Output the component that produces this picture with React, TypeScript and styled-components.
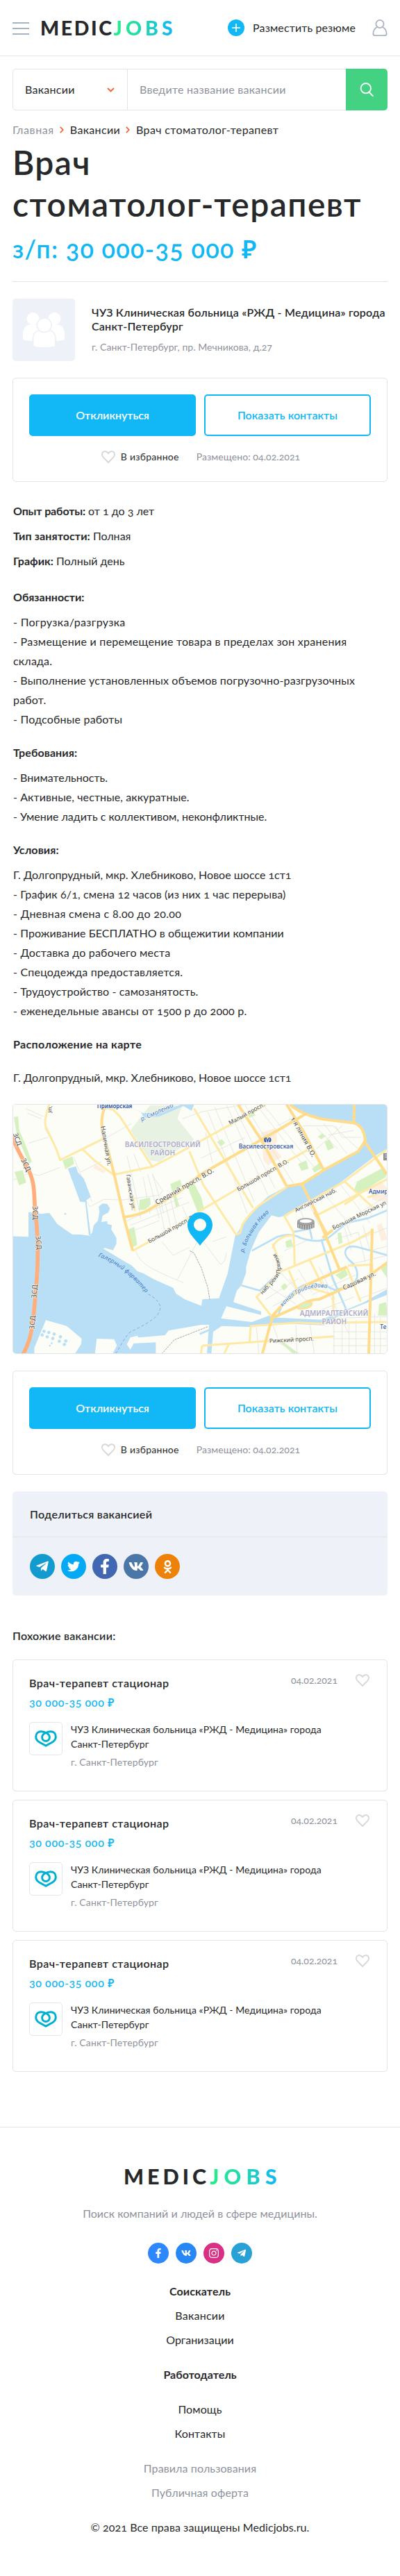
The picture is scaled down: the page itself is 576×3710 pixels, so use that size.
import React from "react";
import styled, { createGlobalStyle, css } from "styled-components";
import {
  FaFacebookF,
  FaInstagram,
  FaOdnoklassniki,
  FaTelegramPlane,
  FaTwitter,
  FaVk,
} from "react-icons/fa";

const color = {
  text: "#272829",
  muted: "#8e919b",
  line: "#e3e4e8",
  blue: "#12b7f5",
  green: "#43d182",
  panel: "#eef1f7",
  orange: "#f2632f",
};

type Tracking = { $track?: number };
const tracking = css<Tracking>`
  letter-spacing: ${({ $track = 0 }) => $track}px;
`;

const GlobalStyle = createGlobalStyle`
  *, *::before, *::after { box-sizing: border-box; }
  body {
    margin: 0;
    background: #fff;
    color: ${color.text};
    font: 400 16px/24px Lato, "Noto Sans", sans-serif;
    font-variant-numeric: oldstyle-nums;
  }
  h1, h2, h3, p { margin: 0; }
  svg { display: block; flex: none; }
  button { font: inherit; cursor: pointer; }
`;

/* ---------- header ---------- */

const Header = styled.header`
  display: flex;
  align-items: center;
  height: 81px;
  padding: 0 18px;
  border-bottom: 1px solid ${color.line};
`;

const Burger = styled.div`
  display: flex;
  flex-direction: column;
  gap: 6px;
  width: 24px;
  margin: 1px 16px 0 0;

  span {
    height: 2px;
    background: #a8b3c2;
  }
`;

const LogoBox = styled.div<{ $large?: boolean }>`
  display: flex;
  justify-content: center;
  padding-left: ${({ $large }) => ($large ? 8 : 0)}px;
  font-weight: 900;
  font-size: ${({ $large }) => ($large ? 30.5 : 28.5)}px;
  line-height: 36px;
`;

const LogoDark = styled.span<Tracking>`
  ${tracking}
`;

const LogoBright = styled.span<Tracking>`
  ${tracking}
  background: linear-gradient(90deg, #27ee86, #20d5b6 50%, #12b7f5 94%);
  background-clip: text;
  -webkit-background-clip: text;
  color: transparent;
`;

const HeaderActions = styled.div`
  display: flex;
  align-items: center;
  margin-left: auto;
`;

const PlusBadge = styled.span`
  display: grid;
  place-items: center;
  width: 24px;
  height: 24px;
  margin-right: 12px;
  border-radius: 50%;
  background: ${color.blue};
`;

const HeaderLink = styled.span<Tracking>`
  ${tracking}
  margin-right: 24px;
`;

/* ---------- search and title ---------- */

const Main = styled.main`
  padding: 18px 18px 79px;
`;

const Search = styled.div`
  display: flex;
  height: 60px;
`;

const SearchSelect = styled.div<Tracking>`
  ${tracking}
  display: flex;
  align-items: center;
  justify-content: space-between;
  width: 166px;
  padding: 0 18px 0 17px;
  border: 1px solid ${color.line};
  border-radius: 5px 0 0 5px;
`;

const SearchField = styled.div<Tracking>`
  ${tracking}
  display: flex;
  flex: 1;
  align-items: center;
  padding-left: 17px;
  border: solid ${color.line};
  border-width: 1px 0;
  color: ${color.muted};
`;

const SearchButton = styled.button`
  display: grid;
  place-items: center;
  width: 60px;
  padding: 0;
  border: 0;
  border-radius: 0 5px 5px 0;
  background: ${color.green};
`;

const Crumbs = styled.nav`
  display: flex;
  align-items: center;
  margin-top: 16px;
`;

const Crumb = styled.span<Tracking & { $muted?: boolean }>`
  ${tracking}
  color: ${({ $muted }) => ($muted ? color.muted : color.text)};
`;

const CrumbArrow = styled.svg`
  margin: 0 9px 0 8px;
`;

const Title = styled.h1`
  margin-top: 5px;
  font-size: 48px;
  font-weight: 600;
  line-height: 60px;
  letter-spacing: 1.45px;
  white-space: nowrap;
`;

const Salary = styled.p`
  margin-top: 12px;
  color: ${color.blue};
  font-size: 36px;
  font-weight: 600;
  line-height: 44px;
  letter-spacing: 1.32px;
`;

const Company = styled.section`
  display: flex;
  gap: 24px;
  margin-top: 25px;
  padding-top: 24px;
  border-top: 1px solid ${color.line};
`;

const CompanyAvatar = styled.div`
  flex: none;
  width: 90px;
  height: 90px;
  border-radius: 5px;
  background: ${color.panel};
`;

const CompanyInfo = styled.div`
  padding-top: 10px;
  white-space: nowrap;
`;

const CompanyName = styled.h2<Tracking>`
  ${tracking}
  font-size: 16px;
  font-weight: 600;
  line-height: 20px;
`;

const CompanyAddress = styled.p<Tracking>`
  ${tracking}
  margin-top: 10px;
  color: ${color.muted};
  font-size: 14px;
  line-height: 20px;
`;

/* ---------- apply card ---------- */

const ApplyCard = styled.section`
  height: 150px;
  margin-top: 24px;
  padding: 23px;
  border: 1px solid ${color.line};
  border-radius: 5px;
`;

const ApplyButtons = styled.div`
  display: grid;
  grid-template-columns: 1fr 1fr;
  gap: 12px;
`;

const ActionButton = styled.button<Tracking & { $outline?: boolean }>`
  ${tracking}
  height: 60px;
  border: 2px solid ${color.blue};
  border-radius: 5px;
  background: ${({ $outline }) => ($outline ? "#fff" : color.blue)};
  color: ${({ $outline }) => ($outline ? color.blue : "#fff")};
  font-weight: 600;
`;

const ApplyMeta = styled.div`
  display: flex;
  align-items: center;
  justify-content: center;
  margin-top: 20px;
  padding-left: 2px;
  font-size: 14px;
  line-height: 20px;
`;

const Favourite = styled.span<Tracking>`
  ${tracking}
  display: flex;
  align-items: center;
  gap: 8px;
  margin-right: 25px;
`;

const Posted = styled.span<Tracking>`
  ${tracking}
  color: ${color.muted};
`;

/* ---------- description ---------- */

const Facts = styled.section`
  display: grid;
  gap: 8px;
  margin-top: 28px;
  line-height: 28px;
`;

const Fact = styled.p<Tracking>`
  ${tracking}
  padding-left: 1px;
`;

const FactName = styled.strong<Tracking>`
  ${tracking}
  font-weight: 700;
`;

const Section = styled.section<{ $first?: boolean }>`
  margin-top: ${({ $first }) => ($first ? 24 : 20)}px;
  padding-left: 1px;
  line-height: 28px;
  white-space: nowrap;
`;

const SectionTitle = styled.h3<Tracking & { $gap?: number }>`
  ${tracking}
  margin-bottom: ${({ $gap = 8 }) => $gap}px;
  font-size: 16px;
  font-weight: 700;
`;

const Line = styled.p<Tracking>`
  ${tracking}
`;

const MapFrame = styled.div`
  position: relative;
  height: 360px;
  margin-top: 24px;
  border: 1px solid ${color.line};
  border-radius: 5px;
  overflow: hidden;
`;

const MapPin = styled.svg`
  position: absolute;
  left: 251px;
  top: 155px;
`;

/* ---------- share ---------- */

const Share = styled.section`
  height: 150px;
  margin-top: 24px;
  border-radius: 5px;
  background: ${color.panel};
`;

const ShareTitle = styled.h3`
  display: flex;
  align-items: center;
  height: 66px;
  padding-left: 25px;
  border-bottom: 1px solid #e2e6eb;
  font-size: 16px;
  font-weight: 600;
  letter-spacing: 0.34px;
`;

const ShareIcons = styled.div`
  display: flex;
  gap: 9px;
  padding: 24px 25px;
`;

const Round = styled.a<{ $bg: string; $size: number }>`
  display: grid;
  place-items: center;
  width: ${({ $size }) => $size}px;
  height: ${({ $size }) => $size}px;
  border-radius: 50%;
  background: ${({ $bg }) => $bg};
  color: #fff;
`;

/* ---------- similar vacancies ---------- */

const SimilarTitle = styled.h3`
  margin: 46px 0 22px;
  font-size: 16px;
  font-weight: 600;
  letter-spacing: 0.3px;
`;

const VacancyList = styled.div`
  display: grid;
  gap: 12px;
`;

const Vacancy = styled.article`
  height: 190px;
  padding: 21px 23px;
  border: 1px solid ${color.line};
  border-radius: 5px;
`;

const VacancyHead = styled.div`
  display: flex;
  align-items: flex-start;
  justify-content: space-between;
`;

const VacancyName = styled.h3`
  font-size: 16px;
  font-weight: 600;
  letter-spacing: 0.48px;
`;

const VacancySide = styled.div`
  display: flex;
  align-items: center;
  gap: 26px;
  margin-top: -2px;
  padding-right: 2px;
  color: ${color.muted};
  font-size: 14px;
  line-height: 20px;
`;

const VacancySalary = styled.p`
  margin-top: 4px;
  color: ${color.blue};
  font-weight: 600;
  letter-spacing: 0.62px;
`;

const VacancyBody = styled.div`
  display: flex;
  gap: 12px;
  margin-top: 16px;
  font-size: 14px;
  line-height: 21px;
`;

const VacancyLogo = styled.div`
  display: grid;
  flex: none;
  place-items: center;
  width: 48px;
  height: 48px;
  border: 1px solid #e4e5ee;
  border-radius: 5px;
`;

const VacancyCompany = styled.p`
  letter-spacing: 0.07px;
`;

const VacancyCity = styled.p`
  margin-top: 5px;
  color: ${color.muted};
  letter-spacing: 0.14px;
`;

/* ---------- footer ---------- */

const Footer = styled.footer`
  padding: 52px 0 53px;
  border-top: 1px solid ${color.line};
  text-align: center;
`;

const Tagline = styled.p`
  margin-top: 24px;
  color: ${color.muted};
  letter-spacing: 0.05px;
`;

const FooterIcons = styled.div`
  display: flex;
  justify-content: center;
  gap: 10px;
  margin: 30px 0 22px;
`;

const FooterGroup = styled.div`
  margin-bottom: 15px;
  line-height: 35px;

  &:last-child {
    margin-bottom: 0;
  }
`;

const FooterLink = styled.p<Tracking & { $bold?: boolean; $muted?: boolean }>`
  ${tracking}
  color: ${({ $muted }) => ($muted ? color.muted : color.text)};
  font-weight: ${({ $bold }) => ($bold ? 700 : 400)};
`;

/* ---------- icons ---------- */

const HeartIcon = () => (
  <svg width="20" height="18" viewBox="0 0 20 18" fill="none" stroke="#d8d8d8" strokeWidth="2" strokeLinejoin="round">
    <path d="M10 17 3 9.900C.6 7.400.4 4.200 2.200 2.300 4.300.300 8 .700 10 4c2-3.300 5.700-3.700 7.800-1.700 1.800 1.900 1.600 5.100-.8 7.600Z" />
  </svg>
);

const UserIcon = () => (
  <svg width="22" height="24" viewBox="0 0 22 24" fill="none" stroke="#aab4c2" strokeWidth="1.800">
    <circle cx="11" cy="6.500" r="5.600" />
    <path d="M7 11C3.500 12.800 1.500 16.500 1.400 20.500c0 1.700 1 2.600 2.600 2.600h14c1.600 0 2.600-.9 2.600-2.600C20.500 16.500 18.500 12.800 15 11" />
  </svg>
);

const CrumbChevron = () => (
  <CrumbArrow width="6" height="10" viewBox="0 0 6 10" fill="none" stroke={color.orange} strokeWidth="1.700">
    <path d="m.8.8 4 4.200-4 4.200" />
  </CrumbArrow>
);

const CloverHeart = () => (
  <svg width="32" height="24" viewBox="0 0 32 24" fill="none" stroke="#00b0d3" strokeWidth="3" strokeLinejoin="round">
    <path d="M16 22.200 6.500 17C3.300 15 1.700 12.300 1.700 9.200 1.700 4.500 5 1.700 9.200 1.700c4.800 0 12.200 3.500 12.200 8.300a5.400 5.400 0 0 1-10.800 0c0-4.800 7.400-8.300 12.200-8.300 4.200 0 7.500 2.800 7.500 7.500 0 3.100-1.600 5.800-4.800 7.800Z" />
  </svg>
);

const PeopleIcon = () => (
  <svg width="90" height="90" viewBox="0 0 90 90" fill="#fff">
    <circle cx="29.500" cy="29" r="9" />
    <circle cx="60.500" cy="29" r="9" />
    <path d="M15 59V50c0-7.500 4.500-12.500 11-12.500h38c6.500 0 11 5 11 12.500v9c-4 1.500-8 2-13 2H28c-5 0-9-.5-13-2Z" />
    <g stroke={color.panel} strokeWidth="3.600" paintOrder="stroke">
      <path d="M30.500 68.500V57c0-6.500 4-10.300 9.500-10.300h11.500c5.500 0 9.500 3.800 9.500 10.300v11.500c-9 2.200-21.500 2.200-30.500 0Z" />
      <circle cx="45.700" cy="38.300" r="9.500" />
    </g>
  </svg>
);

/* ---------- map ---------- */

const WATER =
  "M6 577 75 580V475L105 475 130 481 165 476 200 525 235 550 265 570 300 570 340 575 350 562 357 530 375 510 382 470 378 450 395 436 415 438 427 457 420 475 395 488 390 516 415 512 417 525 435 529 433 548 455 585V610L440 638 403 627 400 632 500 692 520 703 545 728 570 737 620 765 700 800 712 825 750 850 822 878 826 850 898 845 935 740 968 575 1040 470 1110 405 1190 362 1260 350 1350 295 1500 210 1528 165 1520 120 1480 88 1350 72 1260 45 1205 6H1626V200L1580 225 1430 340 1350 395 1180 490 1155 495 1125 487 1070 560 1035 640 1015 710V735L995 790 975 812 960 862 1080 902V917L930 880 907 932 1040 948 1115 920 1135 935 1120 955 1040 970 910 965 873 990 865 1086H846L855 960 822 960 680 985 665 1005 550 1015 545 1007 515 1015 500 1045 515 1067 530 1040 625 1036V1086H438L457 1050 445 1022 370 1020 362 1086H275L302 1045 305 1020 240 965 150 940 100 1060V1086H6Z";

const PARKS = [
  "M12 62 30 60 35 120 55 165 90 255 78 263 45 190 25 140Z",
  "M15 300 50 292 65 345 35 358Z",
  "M222 250 265 232 272 265 235 288Z",
  "M555 420 600 410 603 440 580 462 552 465Z",
  "M505 548 532 538 545 615 520 627Z",
  "M688 352 730 333 738 360 705 380 727 445 712 453Z",
  "M755 345 785 338 822 410 835 465 805 470Z",
  "M890 170 910 158 925 175 905 188Z",
  "M1325 148 1345 133 1360 145 1340 158ZM1355 170 1375 158 1395 195 1368 207Z",
  "M1240 265 1275 250 1285 285 1255 295Z",
  "M1300 285 1330 262 1342 285 1310 302Z",
  "M1478 350 1600 285 1622 300 1618 322 1500 395 1480 385 1495 340Z",
  "M1185 600 1210 590 1218 620 1190 628Z",
  "M1165 795 1182 780 1195 795 1178 812Z",
  "M1400 745 1445 718 1455 745 1425 765Z",
  "M1590 870 1620 862 1626 920 1585 920Z",
  "M1598 720 1626 690V760Z",
  "M1410 565 1425 560 1432 605 1415 612Z",
  "M1510 105C1525 90 1545 110 1540 130L1528 150Z",
  "M1022 55 1050 45 1055 55 1030 65ZM1165 1038 1178 1035 1240 1083 1215 1083Z",
];

const STREETS = [
  "M75 175 160 150 M10 335 75 305 120 315 212 280 M212 250 195 200 145 110 M300 385 340 450 400 418 485 420 640 400 655 380 610 315 M270 235 350 430 M300 300 390 255 M390 165 520 90",
  "M62 25 140 60 M70 45 130 70 M500 230 525 330 560 500 M530 220 560 300 M570 320 600 480 M590 310 640 500 M610 305 660 480 M500 510 740 410 M515 530 770 430 M500 565 640 510 M640 440 665 560 M665 430 690 540 M690 420 715 530",
  "M540 640C550 690 600 720 745 778 M718 765 810 590 780 560 M650 600 700 660 770 625 M740 450 780 540 M822 590 905 700Q925 690 930 650 M870 600 930 580",
  "M850 40 960 320 1020 480 M880 20 1050 430 M930 10 1110 400 M960 10 1140 370 M1010 10 1220 350 M1060 10 1270 280 M1090 10 1310 280 M820 240 1010 150 M840 130 870 260 M1150 100 1230 60 M740 70 822 40 1000 10",
  "M1260 100 1390 100 1500 200 M1320 110 1410 200 M1350 90 1450 220 M1370 140 1480 120 M1400 100 1430 150 1510 150 M1320 200 1430 100",
  "M1240 440 1280 540 M1280 420 1330 530 M1350 390 1440 500 1470 580 M1420 350 1550 520 M1500 480 1626 400 M1380 640 1626 540 M1400 590 1500 560 1530 690 M1440 540 1470 640 M1520 530 1550 640 1626 620 M1180 640 1290 590",
  "M1105 790 1230 870 M1160 730 1280 860 M1100 850 1240 760 M1130 880 1300 790 M1200 760 1260 840 M1240 720 1300 820 M1330 710 1400 850 M1370 730 1450 900 M1300 830 1500 740 M1460 700 1626 660 M1500 850 1626 800 M1330 900 1480 840",
  "M1060 970 1070 1086 M1130 960 1160 1040 1250 1086 M1230 960 1235 1080 M1290 950 1310 1086 M1395 960V1086 M1430 950V1086 M1460 950V1086 M1490 940V1086 M1570 910V1086 M1595 930V1086 M1390 990H1626 M1390 1020H1626 M1390 1050H1626 M1440 930 1626 925 M1340 760 1460 1000",
];

const MINOR_ROADS = [
  "M165 8Q140 80 150 105L195 200 212 248 395 158 M310 203 360 250 440 310 M440 312 610 277 720 220 820 165 960 88 1100 10 M405 22 440 30 470 60 610 277",
  "M770 210 830 355 965 560Q975 578 990 560L1000 525Q1030 480 1070 445L1190 365 M820 465 1000 360 1280 205 M525 640 700 545 822 465 M790 25 1045 455 M525 400 535 470",
  "M1180 490 1220 560 1225 700 M1180 490 1440 340 1620 205 M1130 630C1135 600 1170 575 1215 572 M1130 610 1160 690 1155 740 1060 840 1130 930 M1165 730 1480 600 1560 555 M1440 340 1560 450 M1325 485 1626 330 M1290 680 1350 800 M1200 725 1240 820",
  "M1455 705 1560 700V760 M1450 710 1510 860 M1290 800 1390 830 1395 950 M1540 410 1626 380 M1440 440 1500 400",
  "M1030 1035 1035 965 1110 960 1240 950 1330 955 1440 950 1626 948 M825 1050 1040 1035 1395 1010 M820 1086 825 1050 M920 1086 940 1045",
];

const MAJOR_ROADS = [
  "M405 22Q385 60 395 130L420 210 450 330 487 495 525 640",
  "M487 495Q560 485 600 460L720 390 820 310 1100 150 1270 50",
  "M980 8 1080 160 1190 360 M1190 8 1260 120 1350 290",
  "M1190 362 1260 350 1350 292 1500 210 1530 165Q1525 100 1480 88L1350 72Q1250 50 1205 8 M1483 8 1480 85 M1528 170 1610 290 1622 310",
  "M1255 350 1320 480 1420 725 M1310 470 1365 570 1345 585 M1345 585 1390 550",
  "M1085 1086 1130 920Q1190 850 1270 790L1450 710 M1130 930 1240 880Q1290 850 1330 850L1530 760 1626 690 M1560 545 1545 1086",
];

const CANALS =
  "M1040 640 1150 580Q1210 560 1250 585 1330 610 1370 585L1450 520 1540 500 1626 465M1340 590 1390 760 1450 900M995 790 1075 812 1130 760M1626 660 1500 625C1440 610 1430 650 1460 680 1500 710 1510 760 1470 790L1400 810Q1320 770 1260 790 1170 840 1155 920M1215 560 1290 545 1300 590M815 1000 860 980";

type Label = { t: string; x: number; y: number; r?: number; s?: number; c?: string; w?: number; i?: boolean; a?: "middle" };

const INK = "#4c4c4c";
const NAVY = "#2a52a4";
const RIVER = "#3f78c2";
const DISTRICT = "#aeabcb";

const LABELS: Label[] = [
  { t: "ЗСД", x: 8, y: 135, r: 70, s: 29 },
  { t: "ЗСД", x: 42, y: 247, r: 65, s: 30 },
  { t: "ЗСД", x: 93, y: 447, r: 88, s: 30 },
  { t: "ЗСД", x: 106, y: 577, r: 84, s: 30 },
  { t: "ЗСД", x: 109, y: 846, r: -86, s: 30 },
  { t: "ЗСД", x: 100, y: 980, r: -86, s: 30 },
  { t: "ул.", x: 172, y: 45, r: -80, s: 24 },
  { t: "Приморская", x: 371, y: 23, s: 24, c: NAVY, w: 600 },
  { t: "Наличная ул.", x: 387, y: 103, r: 80, s: 27 },
  { t: "р. Смоленка", x: 564, y: 80, r: -24, s: 27, c: RIVER, i: true },
  { t: "ВАСИЛЕОСТРОВСКИЙ", x: 655, y: 192, s: 30, c: DISTRICT, w: 600, a: "middle" },
  { t: "РАЙОН", x: 655, y: 227, s: 30, c: DISTRICT, w: 600, a: "middle" },
  { t: "Гаванская ул.", x: 497, y: 312, r: 81, s: 24 },
  { t: "Средний просп. В.О.", x: 630, y: 442, r: -30, s: 29 },
  { t: "Большой просп. В.О.", x: 597, y: 608, r: -29, s: 25 },
  { t: "Большой просп. В.О.", x: 982, y: 384, r: -30, s: 25 },
  { t: "Малый просп.", x: 946, y: 97, r: -29, s: 25 },
  { t: "1-я линия В.О.", x: 1207, y: 68, r: 61, s: 28 },
  { t: "Василеостровская", x: 983, y: 198, s: 26, c: NAVY, w: 500 },
  { t: "Английская наб.", x: 1231, y: 474, r: -27, s: 25 },
  { t: "Большая Морская ул.", x: 1393, y: 550, r: -26, s: 25 },
  { t: "Адмир", x: 1545, y: 394, s: 25, c: NAVY, w: 500 },
  { t: "Садовая ул.", x: 1438, y: 810, r: -25, s: 27 },
  { t: "Рижский просп.", x: 1116, y: 1038, r: -3, s: 25 },
  { t: "Те", x: 1594, y: 977, s: 25, c: NAVY, w: 500 },
  { t: "АДМИРАЛТЕЙСКИЙ", x: 1395, y: 922, s: 30, c: DISTRICT, w: 600, a: "middle" },
  { t: "РАЙОН", x: 1396, y: 957, s: 30, c: DISTRICT, w: 600, a: "middle" },
];

const TANKS = [
  [142, 988], [134, 1004], [163, 993], [156, 1012], [186, 1000], [180, 1019],
  [213, 1012], [208, 1031], [236, 1030], [230, 1045],
];

const CityMap = () => (
  <svg width="538" height="358" viewBox="9 9 1614 1074" fontFamily="Noto Sans, sans-serif">
    <path fill="#fcfdf6" d="M0 0h1640v1100H0z" />
    <path fill="#e7f2e3" d="M515 120 600 12 740 12 718 70 790 160 640 255 600 250Z" />
    <path fill="#fdeee0" d="M360 265 410 295 400 305 358 285ZM1080 130 1145 110 1150 170 1130 190 1170 235 1110 270 1090 250ZM1555 360 1600 340 1626 370V430L1560 420ZM1580 530 1600 520 1626 590 1600 600Z" />
    <g fill="#d4f1bf">{PARKS.map((d) => <path key={d} d={d} />)}</g>
    <g fill="none" stroke="#e2e2df" strokeWidth="2.500">{STREETS.map((d) => <path key={d} d={d} />)}</g>
    <g fill="#b9dff6">
      <path d={WATER} />
      <path d="M245 285 280 275 288 300 315 330 344 407 325 422 344 573 336 573 320 430 298 428Z" />
      <path d="M520 25 560 40 575 65 640 60 760 8 735 8 640 45 570 45ZM735 10 780 35 790 8Z" />
      <path d="M1120 928 1340 938 1520 865 1626 805V830L1460 895 1350 962 1120 952Z" />
      <circle cx="234" cy="481" r="4" />
      {TANKS.map(([x, y]) => <circle key={`${x}-${y}`} cx={x} cy={y} r="7" />)}
      <circle cx="175" cy="1040" r="4" />
      <circle cx="167" cy="1050" r="4" />
    </g>
    <path d={CANALS} fill="none" stroke="#b9dff6" strokeWidth="8" />
    <g fill="none" stroke="#ffe9a6" strokeWidth="9" strokeLinejoin="round">{MINOR_ROADS.map((d) => <path key={d} d={d} />)}</g>
    <g fill="none" stroke="#ffdc8c" strokeWidth="12" strokeLinejoin="round">{MAJOR_ROADS.map((d) => <path key={d} d={d} />)}</g>
    <path d="M1240 885C1250 862 1290 855 1300 868 1298 885 1265 895 1240 890Z" fill="#d4f1bf" stroke="#ffe09a" strokeWidth="7" />
    <path d="M0 130C20 200 50 240 75 290 105 350 98 400 104 470 120 590 118 700 106 820 95 960 90 1020 50 1090" fill="none" stroke="#ffae7c" strokeWidth="17" />
    <g fill="none" stroke="#a9a9a9" strokeWidth="3" strokeDasharray="9 3">
      <path d="M772 640 790 650 822 715 850 800 858 850" />
      <path d="M650 1086 705 1025 850 968" />
    </g>
    <path d="M592 827C640 855 660 880 630 920 590 960 530 980 510 995 480 1030 470 1060 450 1086" fill="none" stroke="#7f9fd0" strokeWidth="2.500" strokeDasharray="12 9" />

    <defs>
      <path id="fairway" d="M376 665 Q430 685 480 722 Q530 760 586 828" />
      <path id="neva" d="M1005 648 Q1030 550 1122 468" />
      <path id="pryazhka" d="M1085 830 Q1150 765 1163 735 Q1170 690 1136 640" />
      <path id="griboedov" d="M1172 882 Q1260 780 1376 803" />
    </defs>
    <g stroke="#fcfdf6" strokeWidth="4" strokeLinejoin="round" paintOrder="stroke">
      {LABELS.map(({ t, x, y, r = 0, s = 26, c = INK, w = 400, i, a }) => (
        <text
          key={`${t}-${x}-${y}`}
          transform={`translate(${x} ${y}) rotate(${r})`}
          fontSize={s}
          fontWeight={w}
          fontStyle={i ? "italic" : undefined}
          textAnchor={a}
          fill={c}
        >
          {t}
        </text>
      ))}
      <text fontSize="25" fill={INK}><textPath href="#pryazhka" textLength="212">наб. реки Пряжки</textPath></text>
      <text fontSize="25" fill={RIVER} fontStyle="italic"><textPath href="#griboedov" textLength="220">канал Грибоедова</textPath></text>
    </g>
    <text fontSize="26" fill={RIVER} fontStyle="italic"><textPath href="#fairway" textLength="262">Галерный фарватер</textPath></text>
    <text fontSize="25" fill={RIVER} fontStyle="italic"><textPath href="#neva" textLength="208">р. Большая Нева</textPath></text>

    <g fill="none" stroke={NAVY} strokeWidth="4">
      <path d="M1098 170C1090 160 1096 150 1103 153L1108 168 1113 153C1120 150 1126 160 1118 170" />
      <path d="M1101 171 1097 155M1115 171 1119 155" />
    </g>
    <g>
      <path fill="#8f8f8f" d="M1236 515V540Q1273 558 1310 540V515Z" />
      <ellipse cx="1273" cy="514" rx="37" ry="15" fill="#a4a4a4" />
      <ellipse cx="1273" cy="512" rx="26" ry="8" fill="#fff" />
      <path d="M1242 525V542M1252 528V546M1262 530V548M1273 530V549M1284 530V548M1294 528V546M1304 525V542" stroke="#ddd" strokeWidth="3" />
      <path fill="#8f8f8f" d="M1608 218H1630V250H1608Z" />
      <path stroke="#ddd" strokeWidth="3" d="M1614 226H1630M1614 235H1630" />
    </g>
  </svg>
);

/* ---------- page parts ---------- */

const Logo = ({ large }: { large?: boolean }) => (
  <LogoBox $large={large}>
    <LogoDark $track={large ? 5 : 2.6}>MEDIC</LogoDark>
    <LogoBright $track={large ? 7.2 : 5}>JOBS</LogoBright>
  </LogoBox>
);

const Apply = () => (
  <ApplyCard>
    <ApplyButtons>
      <ActionButton>Откликнуться</ActionButton>
      <ActionButton $outline $track={0.06}>Показать контакты</ActionButton>
    </ApplyButtons>
    <ApplyMeta>
      <Favourite $track={0.25}><HeartIcon />В избранное</Favourite>
      <Posted $track={0.07}>Размещено: 04.02.2021</Posted>
    </ApplyMeta>
  </ApplyCard>
);

type Row = [text: string, track: number];

const DUTIES: Row[] = [
  ["- Погрузка/разгрузка", 0.31],
  ["- Размещение и перемещение товара в пределах зон хранения", 0.26],
  ["склада.", 0.2],
  ["- Выполнение установленных объемов погрузочно-разгрузочных", 0.15],
  ["работ.", 0.2],
  ["- Подсобные работы", 0.2],
];

const REQUIREMENTS: Row[] = [
  ["- Внимательность.", 0],
  ["- Активные, честные, аккуратные.", 0.1],
  ["- Умение ладить с коллективом, неконфликтные.", 0],
];

const CONDITIONS: Row[] = [
  ["Г. Долгопрудный, мкр. Хлебниково, Новое шоссе 1ст1", 0],
  ["- График 6/1, смена 12 часов (из них 1 час перерыва)", 0.16],
  ["- Дневная смена с 8.00 до 20.00", 0.33],
  ["- Проживание БЕСПЛАТНО в общежитии компании", 0.07],
  ["- Доставка до рабочего места", 0.2],
  ["- Спецодежда предоставляется.", 0.2],
  ["- Трудоустройство - самозанятость.", 0.12],
  ["- еженедельные авансы от 1500 р до 2000 р.", 0.2],
];

const Lines = ({ rows }: { rows: Row[] }) => (
  <>{rows.map(([text, track]) => <Line key={text} $track={track}>{text}</Line>)}</>
);

export default function App() {
  return (
    <>
      <GlobalStyle />
      <Header>
        <Burger><span /><span /><span /></Burger>
        <Logo />
        <HeaderActions>
          <PlusBadge>
            <svg width="12" height="12" viewBox="0 0 12 12" stroke="#fff" strokeWidth="1.600"><path d="M6 0v12M0 6h12" /></svg>
          </PlusBadge>
          <HeaderLink $track={0.12}>Разместить резюме</HeaderLink>
          <UserIcon />
        </HeaderActions>
      </Header>

      <Main>
        <Search>
          <SearchSelect $track={0.27}>
            Вакансии
            <svg width="11" height="7" viewBox="0 0 11 7" fill="none" stroke={color.orange} strokeWidth="1.800"><path d="m1 1 4.500 4.500L10 1" /></svg>
          </SearchSelect>
          <SearchField $track={0.27}>Введите название вакансии</SearchField>
          <SearchButton aria-label="Найти">
            <svg width="20" height="20" viewBox="0 0 20 20" fill="none" stroke="#fff" strokeWidth="1.900" strokeLinecap="round">
              <circle cx="8.800" cy="8.200" r="7.200" />
              <path d="m13.500 13.800 5.400 5.300" />
            </svg>
          </SearchButton>
        </Search>

        <Crumbs>
          <Crumb $muted $track={0.6}>Главная</Crumb>
          <CrumbChevron />
          <Crumb $track={0.35}>Вакансии</Crumb>
          <CrumbChevron />
          <Crumb $track={0.37}>Врач стоматолог-терапевт</Crumb>
        </Crumbs>

        <Title>Врач<br />стоматолог-терапевт</Title>
        <Salary>з/п: 30 000-35 000 ₽</Salary>

        <Company>
          <CompanyAvatar><PeopleIcon /></CompanyAvatar>
          <CompanyInfo>
            <CompanyName $track={0.22}>ЧУЗ Клиническая больница «РЖД - Медицина» города<br />Санкт-Петербург</CompanyName>
            <CompanyAddress $track={0.05}>г. Санкт-Петербург, пр. Мечникова, д.27</CompanyAddress>
          </CompanyInfo>
        </Company>

        <Apply />

        <Facts>
          <Fact><FactName $track={-0.14}>Опыт работы:</FactName> от 1 до 3 лет</Fact>
          <Fact><FactName $track={0.1}>Тип занятости:</FactName> Полная</Fact>
          <Fact><FactName>График:</FactName> Полный день</Fact>
        </Facts>

        <Section $first>
          <SectionTitle>Обязанности:</SectionTitle>
          <Lines rows={DUTIES} />
        </Section>
        <Section>
          <SectionTitle $track={0.1}>Требования:</SectionTitle>
          <Lines rows={REQUIREMENTS} />
        </Section>
        <Section>
          <SectionTitle $track={0.1}>Условия:</SectionTitle>
          <Lines rows={CONDITIONS} />
        </Section>
        <Section>
          <SectionTitle $track={0.36} $gap={20}>Расположение на карте</SectionTitle>
          <Line>Г. Долгопрудный, мкр. Хлебниково, Новое шоссе 1ст1</Line>
        </Section>

        <MapFrame>
          <CityMap />
          <MapPin width="36" height="48" viewBox="0 0 36 48">
            <path fill={color.blue} fillRule="evenodd" d="M18 0C8 0 0 8 0 18c0 12.500 11 20 18 30 7-10 18-17.500 18-30C36 8 28 0 18 0Zm0 9a9 9 0 1 1 0 18 9 9 0 0 1 0-18Z" />
          </MapPin>
        </MapFrame>

        <Apply />

        <Share>
          <ShareTitle>Поделиться вакансией</ShareTitle>
          <ShareIcons>
            <Round $size={36} $bg="#139bd0"><FaTelegramPlane size={20} /></Round>
            <Round $size={36} $bg="#03a9f4"><FaTwitter size={18} /></Round>
            <Round $size={36} $bg="#4267b2"><FaFacebookF size={22} /></Round>
            <Round $size={36} $bg="#4a76a8"><FaVk size={22} /></Round>
            <Round $size={36} $bg="#ee8208"><FaOdnoklassniki size={19} /></Round>
          </ShareIcons>
        </Share>

        <SimilarTitle>Похожие вакансии:</SimilarTitle>
        <VacancyList>
          {[0, 1, 2].map((n) => (
            <Vacancy key={n}>
              <VacancyHead>
                <VacancyName>Врач-терапевт стационар</VacancyName>
                <VacancySide>04.02.2021<HeartIcon /></VacancySide>
              </VacancyHead>
              <VacancySalary>30 000-35 000 ₽</VacancySalary>
              <VacancyBody>
                <VacancyLogo><CloverHeart /></VacancyLogo>
                <div>
                  <VacancyCompany>ЧУЗ Клиническая больница «РЖД - Медицина» города<br />Санкт-Петербург</VacancyCompany>
                  <VacancyCity>г. Санкт-Петербург</VacancyCity>
                </div>
              </VacancyBody>
            </Vacancy>
          ))}
        </VacancyList>
      </Main>

      <Footer>
        <Logo large />
        <Tagline>Поиск компаний и людей в сфере медицины.</Tagline>
        <FooterIcons>
          <Round $size={30} $bg="#2d88ff"><FaFacebookF size={14} /></Round>
          <Round $size={30} $bg="#2787f5"><FaVk size={14} /></Round>
          <Round $size={30} $bg="#d93085"><FaInstagram size={16} /></Round>
          <Round $size={30} $bg="#2aa1d6"><FaTelegramPlane size={14} /></Round>
        </FooterIcons>
        <FooterGroup>
          <FooterLink $bold $track={0.1}>Соискатель</FooterLink>
          <FooterLink $track={0.27}>Вакансии</FooterLink>
          <FooterLink>Организации</FooterLink>
        </FooterGroup>
        <FooterGroup>
          <FooterLink $bold>Работодатель</FooterLink>
        </FooterGroup>
        <FooterGroup>
          <FooterLink $track={0.1}>Помощь</FooterLink>
          <FooterLink $track={0.1}>Контакты</FooterLink>
        </FooterGroup>
        <FooterGroup>
          <FooterLink $muted $track={0.11}>Правила пользования</FooterLink>
          <FooterLink $muted $track={0.11}>Публичная оферта</FooterLink>
        </FooterGroup>
        <FooterGroup>
          <FooterLink $track={0.08}>© 2021 Все права защищены Medicjobs.ru.</FooterLink>
        </FooterGroup>
      </Footer>
    </>
  );
}
